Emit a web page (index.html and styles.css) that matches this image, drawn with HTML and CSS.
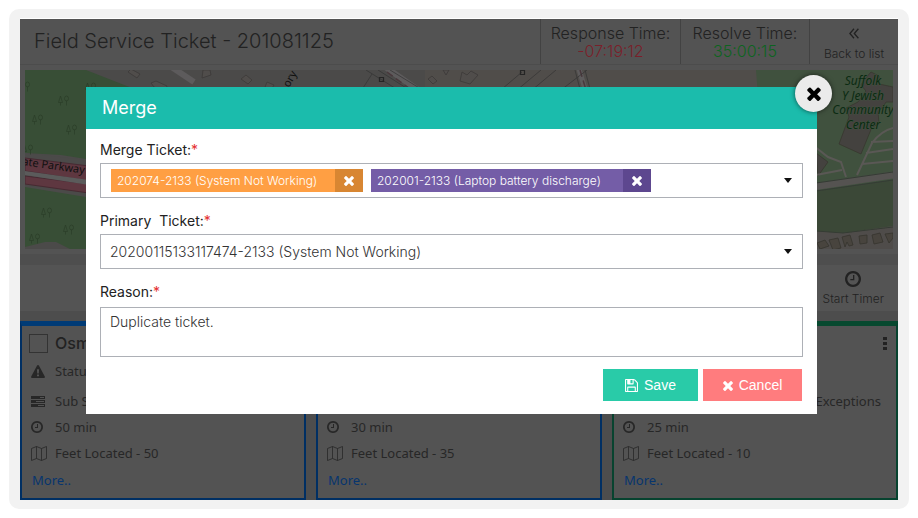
FILE: index.html
```html
<!DOCTYPE html>
<html lang="en">
<head>
<meta charset="utf-8">
<meta name="viewport" content="width=device-width, initial-scale=1">
<title>Field Service Ticket</title>
<link rel="stylesheet" href="styles.css">
</head>
<body>
<svg class="defs" aria-hidden="true">
  <symbol id="times" viewBox="302 238 1188 1316"><path d="M1490 1322q0 40-28 68l-136 136q-28 28-68 28t-68-28l-294-294-294 294q-28 28-68 28t-68-28l-136-136q-28-28-28-68t28-68l294-294-294-294q-28-28-28-68t28-68l136-136q28-28 68-28t68 28l294 294 294-294q28-28 68-28t68 28l136 136q28 28 28 68t-28 68l-294 294 294 294q28 28 28 68z"/></symbol>
  <symbol id="clock" viewBox="128 128 1536 1536"><path d="M1024 544v448q0 14-9 23t-23 9h-320q-14 0-23-9t-9-23v-64q0-14 9-23t23-9h224v-352q0-14 9-23t23-9h64q14 0 23 9t9 23zm416 352q0-148-73-273t-198-198-273-73-273 73-198 198-73 273 73 273 198 198 273 73 273-73 198-198 73-273zm224 0q0 209-103 385.500t-279.500 279.500-385.500 103-385.500-103-279.500-279.500-103-385.500 103-385.500 279.500-279.500 385.500-103 385.500 103 279.500 279.500 103 385.500z"/></symbol>
  <symbol id="save" viewBox="128 128 1536 1536"><path d="M512 1536h768v-384h-768v384zm896 0h128v-896q0-14-10-38.500t-20-34.500l-281-281q-10-10-34-20t-39-10v416q0 40-28 68t-68 28h-576q-40 0-68-28t-28-68v-416h-128v1280h128v-416q0-40 28-68t68-28h832q40 0 68 28t28 68v416zm-384-928v-320q0-13-9.500-22.500t-22.500-9.500h-192q-13 0-22.500 9.500t-9.500 22.500v320q0 13 9.500 22.500t22.500 9.500h192q13 0 22.500-9.500t9.500-22.500zm640 32v928q0 40-28 68t-68 28h-1344q-40 0-68-28t-28-68v-1344q0-40 28-68t68-28h928q40 0 88 20t76 48l280 280q28 28 48 76t20 88z"/></symbol>
  <symbol id="caret" viewBox="0 0 8 5"><path d="M0 0h8L4 5z"/></symbol>
  <symbol id="warning" viewBox="0 0 14 13"><path fill-rule="evenodd" d="M7 0q.6 0 .9.600L13.800 11.600q.5 1.400-.9 1.400H1.100q-1.400 0-.9-1.400L6.100.6Q6.400 0 7 0zM5.900 4.300l.3 4.200h1.600l.3-4.200zM6 9.500v1.800h2V9.500z"/></symbol>
  <symbol id="server" viewBox="0 0 14 11"><path fill-rule="evenodd" d="M0 0h14v3H0zM0 4h14v3H0zM0 8h14v3H0zM9 1v1h4V1zM5 5v1h8V5zM7 9v1h6V9z"/></symbol>
  <symbol id="map-icon" viewBox="0 0 16 15"><path fill="none" stroke="currentColor" stroke-width=".8" d="M.5 2.500 5.500.5l5 2 5-2v12l-5 2-5-2-5 2zM5.500.5v12M10.500 2.500v12"/></symbol>
  <symbol id="tree" viewBox="0 0 11 11"><g fill="none" stroke="#2c3f2a" stroke-width=".8"><path d="M2.500 10.500v-3M.5 7.500h4l-2-6.500zM8.500 10.500v-5"/><ellipse cx="8.500" cy="3.500" rx="2" ry="2.500"/></g></symbol>
</svg>

<div class="frame">
  <main class="app">
    <header class="topbar">
      <h1>Field Service Ticket - 201081125</h1>
      <div class="time"><span>Response Time:</span><span class="late">-07:19:12</span></div>
      <div class="time"><span>Resolve Time:</span><span class="ok">35:00:15</span></div>
      <a class="back" href="#"><svg width="10" height="11" viewBox="0 0 10 11" aria-hidden="true"><path fill="none" stroke="currentColor" stroke-width="1.300" d="M5 .8.900 5.500 5 10.200M9.400.8 5.300 5.500l4.100 4.700"/></svg>Back to list</a>
    </header>

    <div class="map">
      <svg viewBox="25 70 868 179" preserveAspectRatio="xMidYMid slice" role="img" aria-label="Street map">
        <path fill="#4b4a49" d="M25 70h400v179H25z"/>
        <path fill="#504d4a" d="M425 70h468v179H425z"/>
        <path fill="#384e36" d="M25 70h61l46 18v90l-46-19-25-4-36-2z"/>
        <path fill="#384e36" d="M25 187l61 10v52H70l-14-7H45l-20 5z"/>
        <path fill="#4b4a49" d="M25 153l61 7v33l-61-8z"/>
        <path fill="#5e3740" stroke="#472a32" d="M25 158l64 8v15l-64-10zM25 176l64 8v9l-64-9z"/>
        <path fill="#5b5b5b" d="M25 171l64 9v5l-64-10z"/>
        <path fill="none" stroke="#5d5b5c" stroke-width="6" d="M170 66l24 16M384 66l34 24"/>
        <path fill="none" stroke="#5d5b5c" stroke-width="5" d="M578 66l8 26"/>
        <path fill="none" stroke="#49383c" stroke-width="1.500" stroke-dasharray="7 4" d="M387 72l23 17M580 70l6 20"/>
        <path fill="none" stroke="#343434" stroke-width=".7" d="M366 70l32 20M378 70l33 21M390 70l31 19M372 74l-9 14M575 70l5 19M585 70l5 19M587 70l-26 20M541 70l-24 20M556 70l-24 20M522 72l-20 17"/>
        <path fill="#504d4b" stroke="#3c3a38" stroke-width=".8" d="M128 72l3-3 9 5-3 4zM151 83l5-2 11 5-2 6-11-5zM203 70h7l1 5-9 3zM246 75l6 5-4 4-7-5zM267 82l7 3-3 5-6-3zM432 76l5 5-4 3-5-5zM443 70h6l-3 5zM462 72l5 3 4-4 7 4-8 9-10-3z"/>
        <path fill="none" stroke="#252525" stroke-width="1.200" d="M379.500 77.500h4v4h-4zM520.500 70.500h4v4h-4z"/>
        <g font-family="Noto Sans, sans-serif" fill="#111">
          <text font-size="11" transform="translate(289 88) rotate(-61)">ory C</text>
          <text font-size="11" transform="translate(22 165) rotate(8)">ate Parkway</text>
        </g>
        <use href="#tree" x="19" y="81" width="11" height="11"/>
        <use href="#tree" x="58" y="95" width="11" height="11"/>
        <use href="#tree" x="32" y="114" width="11" height="11"/>
        <use href="#tree" x="66" y="124" width="11" height="11"/>
        <use href="#tree" x="85" y="82" width="11" height="11"/>
        <use href="#tree" x="22" y="144" width="11" height="11"/>
        <use href="#tree" x="41" y="207" width="11" height="11"/>
        <use href="#tree" x="63" y="224" width="11" height="11"/>
        <use href="#tree" x="29" y="233" width="11" height="11"/>

        <path fill="#40513e" d="M756 70h137v115l-76 7v-70h-57z"/>
        <path fill="#3b4837" d="M816 191l77-11v46l-50 7-27-2z"/>
        <path fill="none" stroke="#555351" stroke-width="7" d="M812 187l81-12"/>
        <path fill="none" stroke="#353c34" d="M816 183l77-11M816 191l77-11M816 231l27 2 50-6"/>
        <path fill="#4f4c4a" d="M816 232l27 2 50-6v21h-77z"/>
        <path fill="#44423f" stroke="#37372f" stroke-width=".8" d="M864 80l7-8 8 4v8l14 3v15h-7l-3 5-5 4 1 13-7 3-11 27-22-10 10-27-3-9 12-6 8-11-5-6zM816 153l12 9-10 14z"/>
        <g fill="none" stroke="#5a5855" stroke-width="2">
          <path d="M893 128q-12 3-21 15l-15 32M871 142l22-1M866 153l27-4M862 164l31-3M814 146l14 11 13 5 5 15M816 175l26-5"/>
        </g>
        <g fill="#48443e" stroke="#36352e" stroke-width=".8">
          <path d="M817 243l8-3 4 6-9 3zM829 240l9-2 3 10-8 2zM842 237l8-2 3 10-4 1-2-4-2 5zM859 236l8-1v8l-7 1zM872 235l8-2 3 9-9 2zM885 234l8-1v5l-4 5z"/>
        </g>
        <g class="place">
          <text x="863" y="85">Suffolk</text>
          <text x="863" y="100">Y Jewish</text>
          <text x="863" y="114">Community</text>
          <text x="863" y="129">Center</text>
        </g>
      </svg>
    </div>

    <div class="toolbar"><button class="timer" type="button"><svg width="16" height="16" aria-hidden="true"><use href="#clock"/></svg>Start Timer</button></div>

    <section class="cards">
      <article class="card">
        <div class="card-head"><input type="checkbox" aria-label="Select ticket"><h2>Osm</h2></div>
        <div class="row"><svg width="14" height="13" aria-hidden="true"><use href="#warning"/></svg><span>Statu</span></div>
        <div class="row spaced"><svg width="14" height="11" aria-hidden="true"><use href="#server"/></svg><span>Sub S</span></div>
        <div class="row"><svg width="12" height="12" aria-hidden="true"><use href="#clock"/></svg><span>50 min</span></div>
        <div class="row"><svg width="16" height="15" aria-hidden="true"><use href="#map-icon"/></svg><span>Feet Located - 50</span></div>
        <a class="more" href="#">More..</a>
      </article>
      <article class="card">
        <div class="card-head"></div>
        <div class="row"></div>
        <div class="row spaced"></div>
        <div class="row"><svg width="12" height="12" aria-hidden="true"><use href="#clock"/></svg><span>30 min</span></div>
        <div class="row"><svg width="16" height="15" aria-hidden="true"><use href="#map-icon"/></svg><span>Feet Located - 35</span></div>
        <a class="more" href="#">More..</a>
      </article>
      <article class="card green">
        <div class="card-head"><button class="kebab" type="button" aria-label="Options"><svg width="4" height="13" viewBox="0 0 4 13" aria-hidden="true"><path d="M0 0h4v3H0zM0 5h4v3H0zM0 10h4v3H0z"/></svg></button></div>
        <div class="row"></div>
        <div class="row spaced"><span class="end">Exceptions</span></div>
        <div class="row"><svg width="12" height="12" aria-hidden="true"><use href="#clock"/></svg><span>25 min</span></div>
        <div class="row"><svg width="16" height="15" aria-hidden="true"><use href="#map-icon"/></svg><span>Feet Located - 10</span></div>
        <a class="more" href="#">More..</a>
      </article>
    </section>

    <form class="modal" role="dialog" aria-labelledby="merge-title">
      <h2 class="modal-head" id="merge-title">Merge</h2>
      <button class="close" type="button" aria-label="Close"><svg width="14" height="15" aria-hidden="true"><use href="#times"/></svg></button>
      <div class="modal-body">
        <label class="label" for="tickets">Merge Ticket:<b>*</b></label>
        <div class="box">
          <span class="chip orange"><span>202074-2133 (System Not Working)</span><button type="button" aria-label="Remove 202074-2133"><svg width="10" height="11" aria-hidden="true"><use href="#times"/></svg></button></span>
          <span class="chip purple"><span>202001-2133 (Laptop battery discharge)</span><button type="button" aria-label="Remove 202001-2133"><svg width="10" height="11" aria-hidden="true"><use href="#times"/></svg></button></span>
          <button class="open" id="tickets" type="button"><svg width="8" height="5" aria-hidden="true"><use href="#caret"/></svg></button>
        </div>
        <label class="label" for="primary">Primary&nbsp; Ticket:<b>*</b></label>
        <div class="pick">
          <select id="primary"><option>20200115133117474-2133 (System Not Working)</option></select>
          <svg width="8" height="5" aria-hidden="true"><use href="#caret"/></svg>
        </div>
        <label class="label" for="reason">Reason:<b>*</b></label>
        <textarea id="reason">Duplicate ticket.</textarea>
        <div class="actions">
          <button class="btn save" type="button"><svg width="13" height="13" aria-hidden="true"><use href="#save"/></svg>Save</button>
          <button class="btn cancel" type="button"><svg width="10" height="11" aria-hidden="true"><use href="#times"/></svg>Cancel</button>
        </div>
      </div>
    </form>
  </main>
</div>
</body>
</html>
```
FILE: styles.css
```css
* { box-sizing: border-box; }
body { margin: 0; padding: 9px; background: #fff; font-family: Inter, "Open Sans", sans-serif; color: #222; }
h1, h2 { margin: 0; font-weight: 400; }
button { border: 0; padding: 0; margin: 0; background: none; color: inherit; font: inherit; }
a { text-decoration: none; }
svg { display: block; flex: none; fill: currentColor; }
.defs { position: absolute; width: 0; height: 0; }

.frame { padding: 9px 11px; background: #f2f2f2; border-radius: 10px; }
.app { position: relative; border-top: 1px solid #fff; background: #535353; }

.topbar { display: flex; height: 46px; border-bottom: 1px solid #4c4c4c; }
.topbar h1 { flex: 1; padding-left: 14px; font-size: 20px; line-height: 45px; font-weight: 300; white-space: nowrap; }
.time { display: flex; flex-direction: column; align-items: center; width: 140px; padding-top: 5px; border-left: 1px solid #424242; font-size: 16px; line-height: 18px; font-weight: 300; }
.time + .time { width: 129px; }
.late { color: #7a1f2a; }
.ok { color: #0d6420; }
.back { display: flex; flex-direction: column; align-items: center; gap: 7px; width: 89px; padding-top: 9px; border-left: 1px solid #424242; color: #222; font-size: 12px; line-height: 16px; font-weight: 300; }

.map { margin: 5px 5px 0; }
.map svg { width: 100%; height: 179px; }
.place { font: italic 12px "Noto Sans", sans-serif; fill: #0b2b12; stroke: #40513e; stroke-width: 1px; paint-order: stroke; text-anchor: middle; }

.toolbar { display: flex; justify-content: flex-end; height: 72px; padding: 6px 14px 0 0; border-top: 5px solid #535353; border-bottom: 10px solid #4d4d4d; background: linear-gradient(#4e4e4e 11px, #545454 11px); }
.timer { display: flex; flex-direction: column; align-items: center; gap: 4px; padding-top: 11px; font-size: 12px; line-height: 16px; font-weight: 300; }

.cards { display: grid; grid-template-columns: repeat(3, 1fr); gap: 10px; background: #4d4d4d; }
.card { padding-bottom: 5px; border: 2px solid #002f63; border-top: 5px solid #003b76; background: #535353; font: 13px/26px "Noto Sans", sans-serif; }
.green { border-color: #07432f; border-top-color: #07492f; }
.card-head { display: flex; align-items: center; gap: 7px; height: 32px; padding: 2px 9px 0 7px; }
.card-head input { appearance: none; width: 19px; height: 19px; margin: 0; border: 1px solid #333; }
.card-head h2 { font: 500 16px/24px Inter, sans-serif; }
.kebab { margin-left: auto; }
.row { display: grid; grid-template-columns: 24px 1fr; align-items: center; height: 26px; padding: 0 15px 0 9px; color: #272727; }
.spaced { margin-top: 4px; }
.end { grid-column: 2; justify-self: end; }
.more { display: block; padding: 1px 10px 0; color: #07356e; }

.modal { position: absolute; top: 68px; left: 66px; right: 81px; background: #fff; }
.modal-head { padding-left: 16px; background: #1bbcac; color: #fff; font-size: 18px; line-height: 42px; }
.close { position: absolute; top: -12px; right: -15px; display: grid; place-items: center; width: 37px; height: 37px; border-radius: 50%; background: #ebebeb; color: #000; box-shadow: 0 0 5px rgba(0, 0, 0, .6); }
.modal-body { padding: 8px 14px 13px; }
.label { display: block; font-size: 14px; line-height: 26px; }
.label b { color: #e53030; font-weight: 400; }
.box { display: flex; align-items: center; gap: 8px; height: 35px; margin-bottom: 10px; padding-left: 10px; border: 1px solid #adb0b6; color: #111; }
.chip { display: flex; height: 23px; color: #fff; font-size: 12px; line-height: 23px; font-weight: 300; white-space: nowrap; }
.chip > span { flex: 1; padding: 0 12px 0 6px; }
.chip button { display: grid; place-items: center; width: 28px; }
.orange { min-width: 252px; background: #ff9f43; }
.orange button { background: #d88632; }
.purple { min-width: 280px; background: #745da7; }
.purple button { background: #5d478f; }
.open { display: flex; align-self: stretch; align-items: center; margin-left: auto; padding: 0 10px; }
.pick { display: grid; align-items: center; margin-bottom: 10px; color: #111; }
.pick > * { grid-area: 1 / 1; }
.pick svg { justify-self: end; margin-right: 11px; pointer-events: none; }
select, textarea { width: 100%; border: 1px solid #adb0b6; border-radius: 0; background: #fff; color: #333; font: 300 14px/20px Inter, sans-serif; }
select { appearance: none; height: 35px; padding: 0 9px; }
textarea { display: block; height: 50px; margin-top: 2px; padding: 4px 9px; resize: none; }
.actions { display: flex; justify-content: flex-end; gap: 5px; margin-top: 12px; padding-right: 1px; }
.btn { display: flex; align-items: center; justify-content: center; gap: 6px; width: 95px; height: 32px; color: #fff; font: 14px "Liberation Sans", sans-serif; }
.save { background: #29cba8; }
.cancel { width: 99px; background: #ff7c7e; }
```
